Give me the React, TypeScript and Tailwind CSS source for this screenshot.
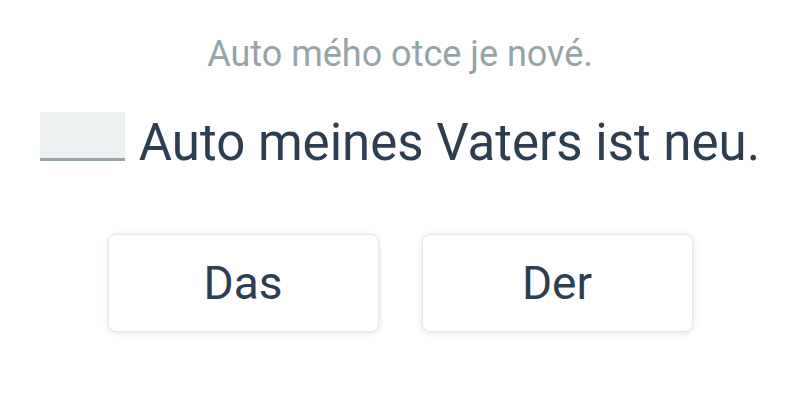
export default function App() {
  const options = ["Das", "Der"];

  return (
    <div className="w-[800px] h-[400px] bg-white flex flex-col items-center font-['Roboto',sans-serif]">
      <p className="mt-[32px] text-[36px] leading-[44px] text-[#95a5a6]">
        Auto mého otce je nové.
      </p>

      <div className="mt-[36px] flex items-end gap-[14px] text-[#2c3e50]">
        <span className="w-[85px] h-[49px] bg-[#ecf0f1] border-b-[3px] border-[#95a5a6] mb-[12px]" />
        <span className="text-[51px] leading-[60px]">
          Auto meines Vaters ist neu.
        </span>
      </div>

      <div className="mt-[61px] flex gap-[43px]">
        {options.map((opt) => (
          <button
            key={opt}
            className="w-[271px] h-[98px] rounded-lg bg-white border border-[#e5e7eb] shadow-[0_1px_6px_rgba(0,0,0,0.12)] text-[46px] text-[#2c3e50]"
          >
            {opt}
          </button>
        ))}
      </div>
    </div>
  );
}
